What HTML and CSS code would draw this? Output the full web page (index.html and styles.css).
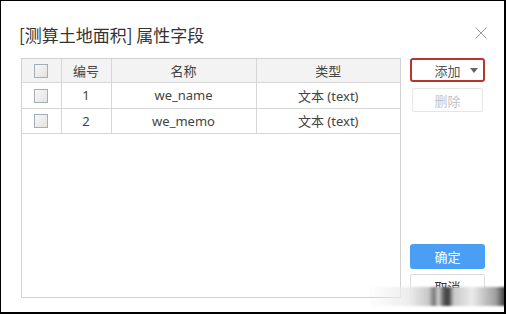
FILE: index.html
```html
<!DOCTYPE html>
<html lang="zh">
<head>
<meta charset="utf-8">
<title>属性字段</title>
<link rel="stylesheet" href="styles.css">
</head>
<body>
<div class="frame">
  <div class="dlg-head">
    <h1 class="dlg-title">[测算土地面积] 属性字段</h1>
    <button class="close" aria-label="关闭">
      <svg width="12" height="12" viewBox="0 0 12 12"><path d="M0.5 0.5L11.5 11.5M11.5 0.5L0.5 11.5" stroke="#9a9a9a" stroke-width="1" fill="none"/></svg>
    </button>
  </div>
  <div class="dlg-body">
    <div class="grid-box">
      <table class="grid">
        <colgroup>
          <col class="c-check"><col class="c-no"><col class="c-name"><col class="c-type">
        </colgroup>
        <thead>
          <tr><th><span class="cb"></span></th><th>编号</th><th>名称</th><th>类型</th></tr>
        </thead>
        <tbody>
          <tr><td><span class="cb"></span></td><td>1</td><td>we_name</td><td>文本 (text)</td></tr>
          <tr><td><span class="cb"></span></td><td>2</td><td>we_memo</td><td>文本 (text)</td></tr>
        </tbody>
      </table>
    </div>
    <div class="actions">
      <button class="btn btn-add">添加<span class="caret"></span></button>
      <button class="btn btn-del">删除</button>
      <button class="btn btn-ok">确定</button>
      <button class="btn btn-cancel">取消</button>
    </div>
  </div>
  <div class="watermark"></div>
</div>
</body>
</html>
```

FILE: styles.css
```css
* { box-sizing: border-box; }
html, body { margin: 0; padding: 0; background: #fff; }
body {
  font-family: "Noto Sans", "Noto Sans CJK SC", sans-serif;
  color: #444;
}
.frame {
  position: relative;
  width: 506px;
  height: 314px;
  border-left: 1px solid #000;
  border-top: 1px solid #000;
  border-right: 2px solid #000;
  border-bottom: 2px solid #000;
  background: #fff;
  overflow: hidden;
}
.dlg-head {
  display: flex;
  justify-content: space-between;
  align-items: flex-start;
  padding: 23px 17px 0 18px;
}
.dlg-title {
  margin: 0;
  font-size: 17px;
  line-height: 22px;
  font-weight: normal;
  color: #333;
  font-family: "Noto Sans CJK SC", sans-serif;
}
.close {
  border: 0;
  background: none;
  padding: 0;
  margin-top: 3px;
  width: 12px;
  height: 12px;
  display: block;
}
.close svg { display: block; }
.dlg-body {
  display: flex;
  gap: 9px;
  margin-top: 12px;
  padding-left: 20px;
}
.grid-box {
  width: 380px;
  height: 240px;
  border: 1px solid #d2d2d2;
}
.grid {
  width: 100%;
  border-collapse: collapse;
  table-layout: fixed;
  font-size: 13px;
}
.c-check { width: 39px; }
.c-no { width: 50px; }
.c-name { width: 145px; }
.grid th, .grid td {
  border-right: 1px solid #d6d6d6;
  border-bottom: 1px solid #d6d6d6;
  text-align: center;
  padding: 0;
  font-weight: normal;
  color: #444;
}
.grid th:last-child, .grid td:last-child { border-right: 0; }
.grid thead th {
  height: 23px;
  background: #f3f3f3;
}
.grid tbody td { height: 26px; }
.grid tbody tr:nth-child(2) td { height: 25px; }
.cb {
  display: inline-block;
  width: 14px;
  height: 14px;
  border: 1px solid #a4aeb8;
  background: linear-gradient(135deg, #f7f7f7, #e3e3e3);
  vertical-align: middle;
  margin-top: -2px;
}
.actions {
  width: 75px;
  display: flex;
  flex-direction: column;
}
.btn {
  font-family: "Noto Sans CJK SC", sans-serif;
  font-size: 13px;
  background: #fff;
  border: 1px solid #ddd;
  border-radius: 2px;
  padding: 0;
  color: #444;
  position: relative;
}
.btn-add {
  height: 24px;
  border: 2px solid #b8352b;
  border-radius: 3px;
  color: #555;
}
.caret {
  position: absolute;
  right: 5px;
  top: 8px;
  width: 0;
  height: 0;
  border-left: 4px solid transparent;
  border-right: 4px solid transparent;
  border-top: 5px solid #666;
}
.btn-del {
  height: 24px;
  margin: 6px 2px 0;
  border-color: #e6e6e6;
  color: #c4c4c4;
}
.btn-ok {
  margin-top: auto;
  height: 25px;
  border: 0;
  border-radius: 3px;
  background: #4a9ff5;
  color: #fff;
}
.btn-cancel {
  height: 24px;
  margin-top: 5px;
  border-color: #dcdcdc;
  color: #333;
}
.watermark {
  position: absolute;
  left: 366px;
  top: 286px;
  width: 140px;
  height: 19px;
  background:
    linear-gradient(to right,
      rgba(255,255,255,0) 0%,
      rgba(235,235,235,0.9) 30%,
      rgba(200,200,200,1) 44%,
      rgba(120,120,120,1) 48%,
      rgba(210,210,210,1) 51%,
      rgba(90,90,90,1) 55%,
      rgba(60,60,60,1) 58%,
      rgba(200,200,200,1) 62%,
      rgba(235,235,235,1) 75%,
      rgba(160,160,160,1) 92%,
      rgba(40,40,40,1) 100%);
  filter: blur(1px);
}
```
